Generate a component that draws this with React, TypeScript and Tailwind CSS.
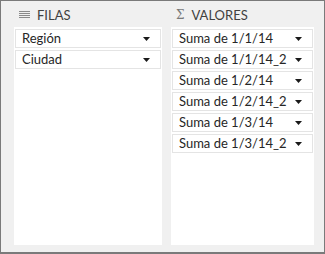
import React from "react";

const Caret = () => (
  <svg width="7" height="4" viewBox="0 0 7 4" className="shrink-0">
    <polygon points="0,0 7,0 3.5,4" fill="#1a1a1a" />
  </svg>
);

const Item = ({ label }: { label: string }) => (
  <div className="flex h-[19px] items-center justify-between border border-[#e4e4e4] bg-white pl-[6px] pr-[10px]">
    <span className="text-[13px] leading-none text-[#262626]">{label}</span>
    <Caret />
  </div>
);

const RowsIcon = () => (
  <svg width="11" height="8" viewBox="0 0 11 8" className="shrink-0">
    <rect x="0" y="0" width="11" height="1" fill="#8a8a8a" />
    <rect x="0" y="2" width="11" height="1" fill="#8a8a8a" />
    <rect x="0" y="4" width="11" height="1" fill="#8a8a8a" />
    <rect x="0" y="6" width="11" height="1" fill="#8a8a8a" />
  </svg>
);

export default function App() {
  const valores = [
    "Suma de 1/1/14",
    "Suma de 1/1/14_2",
    "Suma de 1/2/14",
    "Suma de 1/2/14_2",
    "Suma de 1/3/14",
    "Suma de 1/3/14_2",
  ];
  return (
    <div
      className="flex h-[254px] w-[325px] flex-col border border-b-2 border-[#7a7a7a] bg-[#f0f0f0] pl-[13px] pr-[10px] pb-[7px]"
      style={{ fontFamily: 'Lato, "Open Sans", Arial, sans-serif' }}
    >
      <div className="flex h-[26px] shrink-0 gap-[9px]">
        <div className="flex w-[148px] items-center gap-[7px] pl-[5px] pt-[2px]">
          <RowsIcon />
          <span className="text-[13px] leading-none text-[#404040]">FILAS</span>
        </div>
        <div className="flex w-[143px] items-center gap-[7px] pl-[5px] pt-[2px]">
          <span className="text-[12px] leading-none text-[#7a7a7a]" style={{ fontFamily: '"DejaVu Serif", serif' }}>Σ</span>
          <span className="text-[13px] leading-none text-[#404040]">VALORES</span>
        </div>
      </div>
      <div className="flex flex-1 gap-[9px]">
        <div className="flex w-[148px] flex-col gap-[2px] bg-white px-px pt-[2px]">
          <Item label="Región" />
          <Item label="Ciudad" />
        </div>
        <div className="flex w-[143px] flex-col gap-[2px] bg-white px-px pt-[2px]">
          {valores.map((v) => (
            <Item key={v} label={v} />
          ))}
        </div>
      </div>
    </div>
  );
}
